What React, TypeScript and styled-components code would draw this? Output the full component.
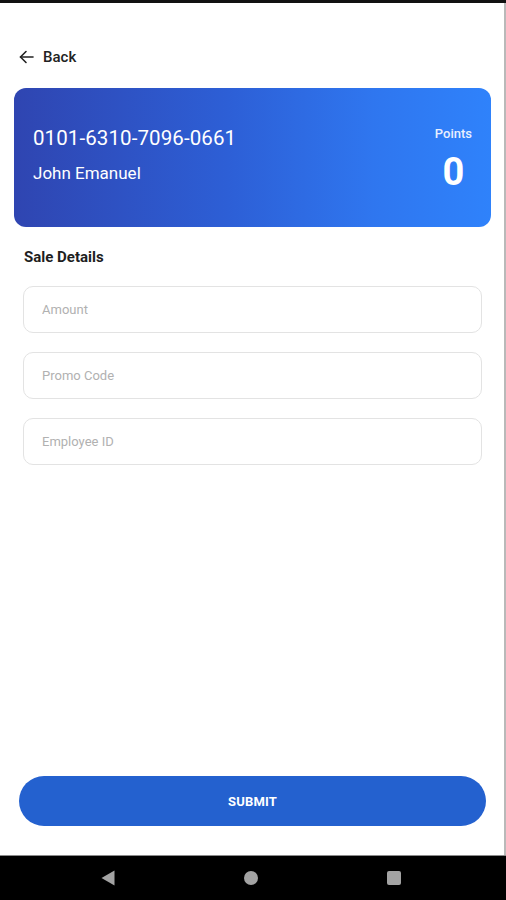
import styled, { createGlobalStyle } from 'styled-components';

const GlobalStyle = createGlobalStyle`
    html, body {
        margin: 0;
        padding: 0;
        background: #ffffff;
    }
    body {
        font-family: Roboto, "Noto Sans", "Liberation Sans", sans-serif;
    }
    * {
        box-sizing: border-box;
    }
`;

const Phone = styled.div`
    width: 506px;
    height: 900px;
    display: flex;
    flex-direction: column;
    background: #000;
`;

const StatusStrip = styled.div`
    height: 3px;
    background: #111;
`;

const Screen = styled.div`
    flex: 1;
    display: flex;
    flex-direction: column;
    background: #fff;
    border-right: 2px solid #b9b9b9;
    padding: 44px 13px 29px 14px;
`;

const BackRow = styled.div`
    display: flex;
    align-items: center;
    gap: 9px;
    height: 20px;
    padding-left: 5px;
    font-size: 15px;
    font-weight: 500;
    color: #222;
    cursor: pointer;
`;

const Card = styled.div`
    margin-top: 21px;
    height: 139px;
    border-radius: 12px;
    background: linear-gradient(90deg, #2f45b1 0%, #2d5fd6 45%, #2f76ef 75%, #2f82fb 100%);
    display: flex;
    justify-content: space-between;
    padding: 37px 19px 0 19px;
    color: #fff;
`;

const Holder = styled.div`
    display: flex;
    flex-direction: column;
`;

const CardNumber = styled.span`
    font-size: 20.5px;
    line-height: 26px;
    letter-spacing: 0.1px;
`;

const HolderName = styled.span`
    margin-top: 12px;
    font-size: 17px;
    line-height: 20px;
`;

const PointsBox = styled.div`
    display: flex;
    flex-direction: column;
    align-items: center;
    padding-top: 1px;
`;

const PointsLabel = styled.span`
    font-size: 13px;
    font-weight: 500;
    line-height: 16px;
    color: #e8efff;
`;

const PointsValue = styled.span`
    margin-top: 10px;
    font-size: 38px;
    font-weight: 700;
    line-height: 40px;
`;

const Form = styled.div`
    display: flex;
    flex-direction: column;
    padding: 0 9px 0 9px;
`;

const SectionTitle = styled.h3`
    margin: 20px 0 0 1px;
    font-size: 15px;
    font-weight: 700;
    line-height: 20px;
    color: #1e1e1e;
`;

const Fields = styled.div`
    display: flex;
    flex-direction: column;
    gap: 19px;
    margin-top: 19px;
`;

const Field = styled.input`
    height: 47px;
    width: 100%;
    border: 1px solid #e3e3e3;
    border-radius: 10px;
    padding: 0 18px;
    font-family: Roboto, "Noto Sans", sans-serif;
    font-size: 13px;
    color: #333;
    outline: none;
    background: #fff;

    &::placeholder {
        color: #b1b1b1;
    }
`;

const Spacer = styled.div`
    flex: 1;
`;

const SubmitButton = styled.button`
    margin: 0 5px 0 5px;
    height: 50px;
    border: none;
    border-radius: 25px;
    background: #2461cf;
    color: #fff;
    font-family: Roboto, "Noto Sans", sans-serif;
    font-size: 13px;
    font-weight: 700;
    letter-spacing: 0.2px;
    cursor: pointer;
`;

const NavBar = styled.div`
    height: 45px;
    background: #000;
    border-top: 1px solid #8a8a8a;
    display: flex;
    align-items: center;
    gap: 103px;
    padding-left: 88px;
`;

const NavButton = styled.div`
    width: 40px;
    height: 40px;
    display: flex;
    align-items: center;
    justify-content: center;
`;

const ArrowLeft = () => (
    <svg width="15" height="14" viewBox="0 0 15 14" fill="none" stroke="#222" strokeWidth="1.6" strokeLinecap="round" strokeLinejoin="round">
        <path d="M14 7H1.5" />
        <path d="M7 1.5L1.5 7L7 12.5" />
    </svg>
);

const App = () => {
    return (
        <>
            <GlobalStyle />
            <Phone>
                <StatusStrip />
                <Screen>
                    <BackRow>
                        <ArrowLeft />
                        <span>Back</span>
                    </BackRow>
                    <Card>
                        <Holder>
                            <CardNumber>0101-6310-7096-0661</CardNumber>
                            <HolderName>John Emanuel</HolderName>
                        </Holder>
                        <PointsBox>
                            <PointsLabel>Points</PointsLabel>
                            <PointsValue>0</PointsValue>
                        </PointsBox>
                    </Card>
                    <Form>
                        <SectionTitle>Sale Details</SectionTitle>
                        <Fields>
                            <Field placeholder="Amount" />
                            <Field placeholder="Promo Code" />
                            <Field placeholder="Employee ID" />
                        </Fields>
                    </Form>
                    <Spacer />
                    <SubmitButton>SUBMIT</SubmitButton>
                </Screen>
                <NavBar>
                    <NavButton>
                        <svg width="16" height="16" viewBox="0 0 16 16">
                            <path d="M14.5 0.5V15.5L1.5 8Z" fill="#a3a3a3" />
                        </svg>
                    </NavButton>
                    <NavButton>
                        <svg width="16" height="16" viewBox="0 0 16 16">
                            <circle cx="8" cy="8" r="7" fill="#a3a3a3" />
                        </svg>
                    </NavButton>
                    <NavButton>
                        <svg width="16" height="16" viewBox="0 0 16 16">
                            <rect x="1" y="1" width="14" height="14" rx="2" fill="#a3a3a3" />
                        </svg>
                    </NavButton>
                </NavBar>
            </Phone>
        </>
    );
};

export default App;
